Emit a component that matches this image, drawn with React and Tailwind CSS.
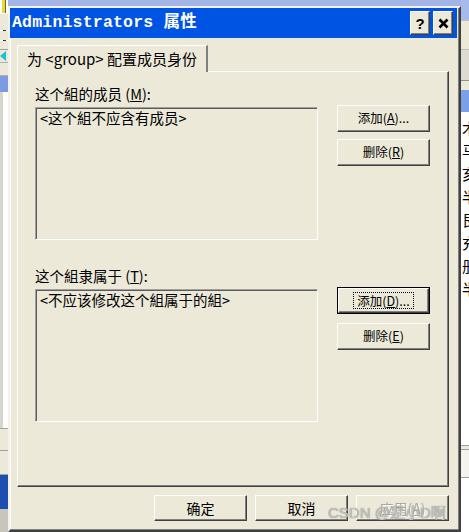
import React from "react";

const raised =
  "bg-[#ece9d8] border border-t-white border-l-white border-b-[#404040] border-r-[#404040] shadow-[inset_-1px_-1px_0_#808080]";

function SideBtn({ children, def }) {
  if (def) {
    return (
      <div className="w-[93px] h-[27px] border border-black">
        <div className={`${raised} w-full h-full flex items-center justify-center`}>
          <span className="border border-dotted border-black px-[3px] leading-[15px] text-[12.5px]">{children}</span>
        </div>
      </div>
    );
  }
  return (
    <div className={`${raised} w-[93px] h-[27px] flex items-center justify-center text-[12.5px]`}>
      {children}
    </div>
  );
}

function BottomBtn({ children, disabled }) {
  return (
    <div
      className={`${raised} w-[93px] h-[26px] flex items-center justify-center text-[14px] ${
        disabled ? "text-[#aca899] [text-shadow:1px_1px_0_#ffffff]" : "text-black"
      }`}
    >
      {children}
    </div>
  );
}

function ListBox({ children }) {
  return (
    <div className="w-[283px] h-[133px] border border-t-[#a0a0a0] border-l-[#a0a0a0] border-b-white border-r-white shadow-[inset_1px_1px_0_#5c5c5c] bg-[#ece9d8] px-[4px] pt-[1px] text-[14.5px] leading-[18px]">
      {children}
    </div>
  );
}

function LeftStrip() {
  return (
    <div className="w-[8px] h-[532px] flex flex-col shrink-0 overflow-hidden">
      <div className="h-[13px] bg-white flex">
        <div className="ml-[2px] w-[4px] h-full bg-[#e8d83a] border-r border-[#6b6b2a]" />
      </div>
      <div className="h-[17px] bg-[#ece9d8] border-t border-[#ffffff]" />
      <div className="h-[1px] bg-[#303030] w-[3px] ml-[3px]" />
      <div className="h-[9px] bg-[#ece9d8]" />
      <div className="h-[1px] bg-[#303030] w-[3px] ml-[3px]" />
      <div className="h-[9px] bg-[#ece9d8] border-b border-[#a0a0a0]" />
      <div className="h-[12px] bg-[#ece9d8] flex items-center">
        <svg width="8" height="12" viewBox="0 0 8 12">
          <path d="M0 6 L6 1 L6 11 Z" fill="#19c3d8" />
        </svg>
      </div>
      <div className="h-[14px] bg-[#ece9d8] border-t border-b border-[#b0b0b0]" />
      <div className="h-[16px] bg-[#7d9be0]" />
      <div className="h-[336px] bg-white flex">
        <div className="w-[3px] h-full bg-[#d8d6cc]" />
      </div>
      <div className="h-[22px] bg-[#ece9d8] border-t border-[#a0a0a0]" />
      <div className="h-[25px] bg-[#ece9d8] border-t border-b border-[#a0a0a0]" />
      <div className="h-[34px] bg-[#1c4fb0]" />
      <div className="flex-1 bg-[#c8c6bc]" />
    </div>
  );
}

function RightStrip() {
  const chars = ["术", "马", "亥", "半", "艮", "充", "册", "半"];
  return (
    <div className="w-[8px] h-[532px] flex flex-col shrink-0 overflow-hidden">
      <div className="h-[20px] bg-[#a6bbec]" />
      <div className="h-[30px] bg-[#ece9d8] border-t border-b border-[#c0c0c0]" />
      <div className="h-[30px] bg-[#dedcd2]" />
      <div className="h-[10px] bg-[#ece9d8] border-t border-[#909090]" />
      <div className="h-[22px] bg-[#7aa0ea]" />
      <div className="h-[333px] bg-white flex flex-col pt-[4px] pl-[1px] overflow-hidden">
        {chars.map((c, i) => (
          <div key={i} className="h-[23px] text-[15px] leading-[23px] text-black whitespace-nowrap w-[20px]">
            {c}
          </div>
        ))}
      </div>
      <div className="h-[5px] bg-[#ece9d8] border-t border-b border-[#a0a0a0]" />
      <div className="h-[28px] bg-[#f4f3ee] border-b border-[#a0a0a0]" />
      <div className="flex-1 bg-white" />
    </div>
  );
}

export default function App() {
  return (
    <div className="w-[469px] h-[532px] overflow-hidden relative flex bg-white font-['Noto_Sans_CJK_SC','Noto_Sans',sans-serif] text-black">
      <LeftStrip />
      <div className="w-[453px] h-[532px] flex flex-col shrink-0">
        <div className="h-[6px] bg-[#a3b5e6]" />
        {/* Dialog */}
        <div className="h-[526px] flex flex-col bg-[#ece9d8] border-t-2 border-l-2 border-r-2 border-b-2 border-t-[#f4f2ea] border-l-[#f4f2ea] border-r-[#404040] border-b-[#404040] shadow-[inset_-1px_-1px_0_#808080,inset_1px_1px_0_#ffffff] pr-[2px]">
          {/* Title bar */}
          <div className="h-[30px] bg-[#0054e3] flex items-center pl-[2px] pr-[4px] shrink-0">
            <span className="text-white font-bold text-[16.5px] font-['Liberation_Mono','Noto_Sans_CJK_SC',monospace] tracking-[0.2px] whitespace-nowrap">
              Administrators 属性
            </span>
            <div className="ml-auto flex gap-[3px]">
              <div className={`${raised} w-[20px] h-[24px] flex items-center justify-center font-bold text-[15px] leading-none font-['Liberation_Sans',sans-serif]`}>
                ?
              </div>
              <div className={`${raised} w-[20px] h-[24px] flex items-center justify-center`}>
                <svg width="11" height="11" viewBox="0 0 11 11">
                  <path d="M1.5 1.5 L9.5 9.5 M9.5 1.5 L1.5 9.5" stroke="#000" strokeWidth="2.6" />
                </svg>
              </div>
            </div>
          </div>

          {/* Tab + page */}
          <div className="mt-[7px] ml-[7px] mr-[8px] flex flex-col">
            <div className="flex">
              <div className="relative z-10 -mb-px w-[191px] h-[27px] bg-[#ece9d8] border-t border-l border-t-white border-l-white border-r-2 border-r-[#808080] rounded-tl-[2px] flex items-center pl-[9px] text-[15px] whitespace-nowrap">
                为 &lt;group&gt; 配置成员身份
              </div>
            </div>
            <div className="h-[416px] border-t border-l border-t-white border-l-white border-r border-b border-r-[#404040] border-b-[#404040] shadow-[inset_-1px_-1px_0_#808080] pl-[17px] pt-[13px] flex flex-col">
              <div className="h-[18px] text-[14.5px] leading-[18px] whitespace-nowrap">
                这个組的成员 (<u>M</u>):
              </div>
              <div className="mt-[4px] flex gap-[19px]">
                <ListBox>&lt;这个組不应含有成员&gt;</ListBox>
                <div className="-mt-[2px] flex flex-col gap-[7px]">
                  <SideBtn>添加(<u>A</u>)...</SideBtn>
                  <SideBtn>删除(<u>R</u>)</SideBtn>
                </div>
              </div>
              <div className="mt-[27px] h-[18px] text-[14.5px] leading-[18px] whitespace-nowrap">
                这个組隶属于 (<u>T</u>):
              </div>
              <div className="mt-[4px] flex gap-[19px]">
                <ListBox>&lt;不应该修改这个組属于的組&gt;</ListBox>
                <div className="-mt-[2px] flex flex-col gap-[9px]">
                  <SideBtn def>添加(<u>D</u>)...</SideBtn>
                  <SideBtn>删除(<u>E</u>)</SideBtn>
                </div>
              </div>
            </div>
          </div>

          {/* Bottom buttons */}
          <div className="mt-[8px] mr-[8px] flex justify-end gap-[8px]">
            <BottomBtn>确定</BottomBtn>
            <BottomBtn>取消</BottomBtn>
            <BottomBtn disabled>应用(<u>A</u>)</BottomBtn>
          </div>
        </div>
      </div>
      <RightStrip />

      {/* watermark */}
      <div className="absolute left-[328px] top-[503px] text-[15px] leading-[20px] text-[#c4c4c4] whitespace-nowrap [text-shadow:0_0_1px_#6e6e6e] font-['Liberation_Sans','Noto_Sans_CJK_SC',sans-serif]">
        CSDN @是小D啊
      </div>
    </div>
  );
}
